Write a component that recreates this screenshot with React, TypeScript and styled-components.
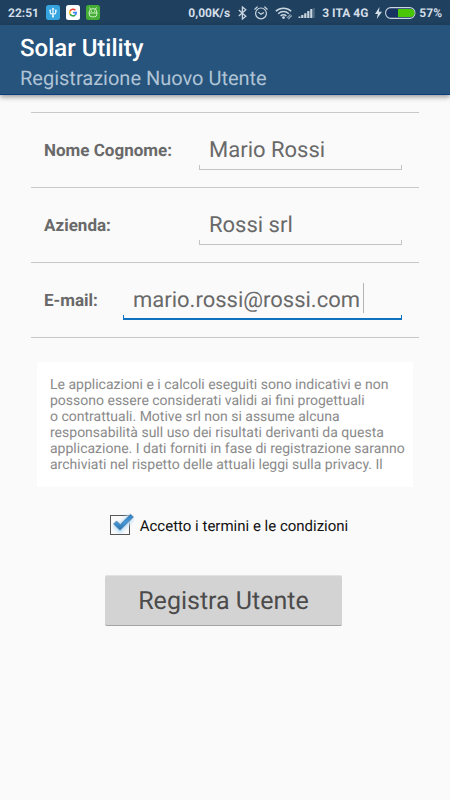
import React, { useState } from "react";
import styled, { createGlobalStyle } from "styled-components";

const GlobalStyle = createGlobalStyle`
  *, *::before, *::after { box-sizing: border-box; }
  body {
    margin: 0;
    background: #fafafa;
    font-family: Roboto, "Liberation Sans", sans-serif;
    color: #696969;
    text-rendering: geometricPrecision;
  }
`;

const StatusBar = styled.div`
  display: flex;
  align-items: center;
  height: 25px;
  padding: 0 8px;
  background: #1f415f;
  color: #d3dde7;
  font-size: 12px;
  line-height: 16px;
  font-weight: 700;
  white-space: nowrap;
`;

const AppIcons = styled.div`
  display: flex;
  gap: 6px;
  margin-left: 7px;
  margin-right: auto;
`;

const AppIcon = styled.svg`
  display: block;
  width: 14px;
  height: 15px;
`;

const StatusIcon = styled.svg<{ $gap: number }>`
  display: block;
  flex: none;
  margin-left: ${(p) => p.$gap}px;
`;

const StatusText = styled.span<{ $gap: number }>`
  margin-left: ${(p) => p.$gap}px;
`;

const Header = styled.header`
  padding: 8px 20px 1px;
  background: #27547d;
  border-bottom: 1px solid #0b3c80;
  box-shadow: 0 2px 5px rgba(0, 0, 0, 0.4);
`;

const Title = styled.h1`
  margin: 0;
  color: #fff;
  font-size: 24px;
  line-height: 30px;
  font-weight: 500;
`;

const Subtitle = styled.p`
  margin: 0;
  color: #b0c4d6;
  font-size: 20px;
  line-height: 30px;
`;

const Form = styled.form`
  display: flex;
  flex-direction: column;
  padding: 17px 31px 24px;
`;

const Fields = styled.div`
  border-bottom: 1px solid #c8c8c8;
`;

const FieldRow = styled.div`
  display: flex;
  align-items: flex-start;
  gap: 23px;
  height: 75px;
  padding: 20px 17px 0 13px;
  border-top: 1px solid #c8c8c8;
`;

const FieldLabel = styled.label<{ $wide?: boolean }>`
  flex: none;
  min-width: ${(p) => (p.$wide ? "132px" : "56px")};
  font-size: 17px;
  line-height: 36px;
  font-weight: 700;
`;

const FieldBox = styled.div<{ $active?: boolean }>`
  position: relative;
  flex: 1;
  min-width: 0;
  height: 37px;

  &::after {
    content: "";
    position: absolute;
    left: 0;
    right: 0;
    bottom: 0;
    height: 5px;
    border: solid ${(p) => (p.$active ? "#0f72bf" : "#c4c4c4")};
    border-width: ${(p) => (p.$active ? "0 1px 2px" : "0 1px 1px")};
    pointer-events: none;
  }
`;

const TextInput = styled.input`
  display: block;
  width: 100%;
  height: 36px;
  padding: 0 10px;
  border: 0;
  outline: 0;
  background: transparent;
  color: #696969;
  font: 400 22px/36px Roboto, "Liberation Sans", sans-serif;
  text-rendering: inherit;
`;

const Caret = styled.span`
  position: absolute;
  left: 240px;
  top: 0;
  width: 1px;
  height: 30px;
  background: #b4b4b4;
`;

const Terms = styled.section`
  height: 125px;
  margin: 24px 6px 0;
  padding: 15px 13px;
  overflow: hidden;
  background: #fff;
  color: #8a8a8a;
  font-size: 14px;
  line-height: 16px;
`;

const TermsText = styled.p`
  margin: 0;
  white-space: pre;
`;

const Consent = styled.label`
  display: flex;
  align-items: center;
  align-self: center;
  gap: 6px;
  margin-top: 26px;
  padding-left: 8px;
  color: #111;
  font-size: 15px;
  line-height: 26px;
`;

const CheckArea = styled.span`
  position: relative;
  width: 24px;
  height: 26px;
`;

const CheckInput = styled.input`
  position: absolute;
  inset: 0;
  width: 24px;
  height: 26px;
  margin: 0;
  opacity: 0;
`;

const CheckDrawing = styled.svg`
  display: block;
  overflow: visible;
`;

const Submit = styled.button`
  align-self: center;
  margin-top: 36px;
  margin-right: 3px;
  height: 51px;
  padding: 2px 33px 0;
  border: 0;
  border-top: 1px solid #e2e2e2;
  border-bottom: 1px solid #a4a4a4;
  border-radius: 2px;
  background: #d3d3d3;
  color: #4b4b4b;
  font: 400 25px/48px Roboto, "Liberation Sans", sans-serif;
  text-rendering: inherit;
`;

const termsText = `Le applicazioni e i calcoli eseguiti sono indicativi e non
possono essere considerati validi ai fini progettuali
o contrattuali. Motive srl non si assume alcuna
responsabilità sull uso dei risultati derivanti da questa
applicazione. I dati forniti in fase di registrazione saranno
archiviati nel rispetto delle attuali leggi sulla privacy. Il`;

function UsbBadge() {
  return (
    <AppIcon viewBox="0 0 14 15">
      <rect width="14" height="15" rx="2.5" fill="#35a4df" />
      <g fill="none" stroke="#e8f6ff" strokeWidth="1.2" strokeLinecap="round">
        <path d="M7 3.6v8M4.2 5.6v1.6c0 1.5 1.2 1.9 2.8 1.9s2.8-.4 2.8-1.9V5.6" />
      </g>
      <path d="M7 2.4l1.5 2h-3z" fill="#e8f6ff" />
      <circle cx="7" cy="11.4" r="1.1" fill="#e8f6ff" />
      <circle cx="4.2" cy="5.4" r=".9" fill="#e8f6ff" />
      <circle cx="9.8" cy="5.4" r=".9" fill="#e8f6ff" />
    </AppIcon>
  );
}

function GoogleBadge() {
  return (
    <AppIcon viewBox="0 0 14 15">
      <rect width="14" height="15" rx="2.5" fill="#fff" />
      <g fill="none" strokeWidth="1.6">
        <path d="M9.4 5.2A3.3 3.3 0 0 0 4.1 6" stroke="#ea4335" />
        <path d="M4.1 6a3.3 3.3 0 0 0 0 3.1" stroke="#fbbc05" />
        <path d="M4.1 9.1a3.3 3.3 0 0 0 5 1" stroke="#34a853" />
        <path d="M9.1 10.1a3.2 3.2 0 0 0 1.2-2.5H7" stroke="#4285f4" />
      </g>
    </AppIcon>
  );
}

function AndroidBadge() {
  return (
    <AppIcon viewBox="0 0 14 15">
      <rect width="14" height="15" rx="2.5" fill="#43ad35" />
      <g fill="none" stroke="#dcf5d5" strokeWidth=".9" strokeLinecap="round">
        <path d="M3.2 7a3.8 3.4 0 0 1 7.6 0v2.4a2.4 2.4 0 0 1-2.4 2.4H5.6a2.4 2.4 0 0 1-2.4-2.4zM3.2 8h7.6M4.6 4.2L3.7 2.8M9.4 4.2l.9-1.4" />
      </g>
      <circle cx="5.4" cy="6.2" r=".6" fill="#dcf5d5" />
      <circle cx="8.6" cy="6.2" r=".6" fill="#dcf5d5" />
    </AppIcon>
  );
}

function StatusIcons() {
  const c = "#c9d5e0";
  return (
    <>
      <StatusIcon $gap={8} width="9" height="14" viewBox="0 0 9 14">
        <path d="M.8 4l7 6.2L4.4 13V1l3.4 2.8-7 6.2" fill="none" stroke={c} strokeWidth="1.3" />
      </StatusIcon>
      <StatusIcon $gap={7} width="14" height="14" viewBox="0 0 14 14">
        <g fill="none" stroke={c} strokeWidth="1.2" strokeLinecap="round">
          <circle cx="7" cy="7.4" r="5.4" />
          <path d="M4.6 6.4L7 8.3l2.5-1.6M.8 3.2l2.4-2.2M13.2 3.2l-2.4-2.2" />
        </g>
      </StatusIcon>
      <StatusIcon $gap={7} width="18" height="14" viewBox="0 0 18 14">
        <g fill="none" stroke={c} strokeWidth="1.5">
          <path d="M.8 5.2a11.2 11.2 0 0 1 15.4 0M3.2 7.7a7.7 7.7 0 0 1 10.6 0M5.6 10a4.2 4.2 0 0 1 5.8 0" />
        </g>
        <circle cx="8.5" cy="11.6" r="1.4" fill={c} />
        <path d="M12 11.8l3.5-3.5M13.2 13l3.5-3.5" stroke="#91a5b7" strokeWidth="1.2" />
      </StatusIcon>
      <StatusIcon $gap={5} width="17" height="12" viewBox="0 0 17 12">
        <path d="M.5 9.5h2V11h-2zM3.2 8h2.2v3H3.2zM6.2 6.3h2.2V11H6.2zM9.2 4h2.2v7H9.2zM12.2 2h2.2v9h-2.2z" fill={c} />
        <path d="M15.2 1h1.4v10h-1.4z" fill="#587289" />
      </StatusIcon>
    </>
  );
}

function Battery() {
  return (
    <>
      <StatusIcon $gap={7} width="7" height="12" viewBox="0 0 7 12">
        <path d="M4.5 0L0 7h2.8L1.8 12 7 4.8H3.9z" fill="#d3dde7" />
      </StatusIcon>
      <StatusIcon $gap={3} width="31" height="12" viewBox="0 0 31 12">
        <rect x=".6" y=".6" width="29.3" height="10.8" rx="5.2" fill="#17335f" stroke="#c9d5e0" strokeWidth="1.1" />
        <path d="M13 2h12.5a4 4 0 0 1 0 8H13z" fill="#49c606" />
      </StatusIcon>
    </>
  );
}

function CheckMark({ checked }: { checked: boolean }) {
  return (
    <CheckDrawing width="24" height="26" viewBox="0 0 24 26" aria-hidden="true">
      <defs>
        <linearGradient id="tick" x1="0" y1="0" x2="0" y2="1">
          <stop offset="0" stopColor="#2f7fc0" />
          <stop offset=".5" stopColor="#4597d6" />
          <stop offset="1" stopColor="#286fae" />
        </linearGradient>
        <filter id="halo" x="-40%" y="-40%" width="180%" height="180%">
          <feGaussianBlur stdDeviation="1.5" />
        </filter>
      </defs>
      <rect x=".5" y="2.5" width="19" height="19" fill="#fafafa" stroke="#565656" />
      {checked && (
        <>
          <path d="M5.5 11l4.5 4.5L21 4" fill="none" stroke="#c5e3f9" strokeWidth="8" filter="url(#halo)" />
          <path d="M3.5 11l3-3 3.7 3.5L20.5 1.3l3 2.7L10 17.3z" fill="url(#tick)" stroke="#5a7fa3" strokeWidth=".7" />
        </>
      )}
    </CheckDrawing>
  );
}

export default function App() {
  const [name, setName] = useState("Mario Rossi");
  const [company, setCompany] = useState("Rossi srl");
  const [email, setEmail] = useState("mario.rossi@rossi.com");
  const [accepted, setAccepted] = useState(true);

  return (
    <>
      <GlobalStyle />
      <StatusBar>
        <span>22:51</span>
        <AppIcons>
          <UsbBadge />
          <GoogleBadge />
          <AndroidBadge />
        </AppIcons>
        <span>0,00K/s</span>
        <StatusIcons />
        <StatusText $gap={7}>3 ITA 4G</StatusText>
        <Battery />
        <StatusText $gap={3}>57%</StatusText>
      </StatusBar>
      <Header>
        <Title>Solar Utility</Title>
        <Subtitle>Registrazione Nuovo Utente</Subtitle>
      </Header>
      <Form onSubmit={(e) => e.preventDefault()}>
        <Fields>
          <FieldRow>
            <FieldLabel $wide htmlFor="name">Nome Cognome:</FieldLabel>
            <FieldBox>
              <TextInput id="name" value={name} onChange={(e) => setName(e.target.value)} />
            </FieldBox>
          </FieldRow>
          <FieldRow>
            <FieldLabel $wide htmlFor="company">Azienda:</FieldLabel>
            <FieldBox>
              <TextInput id="company" value={company} onChange={(e) => setCompany(e.target.value)} />
            </FieldBox>
          </FieldRow>
          <FieldRow>
            <FieldLabel htmlFor="email">E-mail:</FieldLabel>
            <FieldBox $active>
              <TextInput id="email" type="email" value={email} onChange={(e) => setEmail(e.target.value)} />
              <Caret />
            </FieldBox>
          </FieldRow>
        </Fields>
        <Terms>
          <TermsText>{termsText}</TermsText>
        </Terms>
        <Consent>
          <CheckArea>
            <CheckInput type="checkbox" checked={accepted} onChange={(e) => setAccepted(e.target.checked)} />
            <CheckMark checked={accepted} />
          </CheckArea>
          Accetto i termini e le condizioni
        </Consent>
        <Submit type="submit">Registra Utente</Submit>
      </Form>
    </>
  );
}
